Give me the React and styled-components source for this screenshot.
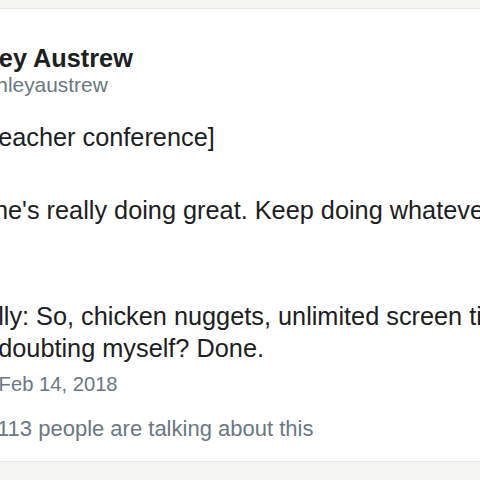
import React from "react";
import styled, { createGlobalStyle } from "styled-components";

const GlobalStyle = createGlobalStyle`
  html, body {
    margin: 0;
    padding: 0;
    background: #f5f5f4;
    overflow: hidden;
  }
  body {
    font-family: "Liberation Sans", Arial, Helvetica, sans-serif;
  }
`;

const Page = styled.div`
  width: 480px;
  height: 480px;
  overflow: hidden;
  padding-top: 8px;
  box-sizing: border-box;
  background: #f5f5f4;
`;

const Card = styled.article`
  margin-left: -71px;
  width: 760px;
  background: #fff;
  border: 1px solid #e1e8ed;
  border-radius: 4px;
  padding: 34px 0 19px 26px;
  box-sizing: border-box;
`;

const Header = styled.header`
  display: flex;
  flex-direction: column;
`;

const Name = styled.div`
  font-size: 25.3px;
  line-height: 30px;
  font-weight: 700;
  color: #1c2022;
  white-space: nowrap;
  margin-left: -12px;
`;

const Handle = styled.div`
  font-size: 20.9px;
  line-height: 24px;
  color: #697882;
  white-space: nowrap;
  margin-left: -3px;
`;

const Body = styled.div`
  margin-top: 24px;
  color: #1c2022;
  font-size: 25.3px;
  line-height: 32px;
`;

const Line = styled.p`
  margin: ${(p) => p.$gap || 0}px 0 0;
  white-space: nowrap;
`;

const Meta = styled.div`
  margin-top: ${(p) => p.$gap}px;
  font-size: ${(p) => p.$size}px;
  line-height: 26px;
  color: #697882;
  white-space: nowrap;
  display: flex;
  align-items: center;
  gap: 9px;
`;

const TalkIcon = () => (
  <svg width="32" height="26" viewBox="0 0 32 26" fill="none">
    <path
      d="M6 4h20a3 3 0 0 1 3 3v10a3 3 0 0 1-3 3H14l-6 5v-5H6a3 3 0 0 1-3-3V7a3 3 0 0 1 3-3z"
      stroke="#697882"
      strokeWidth="2"
    />
  </svg>
);

export default function App() {
  return (
    <Page>
      <GlobalStyle />
      <Card>
        <Header>
          <Name>Ashley Austrew</Name>
          <Handle>@ashleyaustrew</Handle>
        </Header>
        <Body>
          <Line>[at teacher conference]</Line>
          <Line $gap={41}>I: She's really doing great. Keep doing whatever you're doing.</Line>
          <Line $gap={74}>Orally: So, chicken nuggets, unlimited screen time,</Line>
          <Line>but doubting myself? Done.</Line>
        </Body>
        <Meta $gap={7} $size={20.2}>PM· Feb 14, 2018</Meta>
        <Meta $gap={19} $size={22}>
          <TalkIcon />
          113 people are talking about this
        </Meta>
      </Card>
    </Page>
  );
}
